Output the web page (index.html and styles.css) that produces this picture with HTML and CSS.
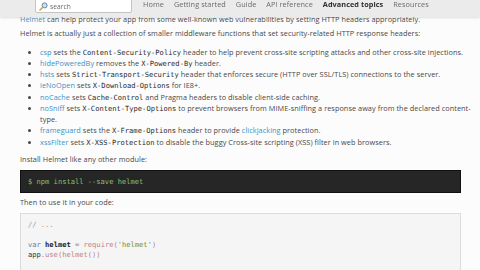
FILE: index.html
```html
<!DOCTYPE html>
<html lang="en">
<head>
  <meta charset="UTF-8" />
  <meta name="viewport" content="width=device-width, initial-scale=1.0"/>
  <title>Security best practices - Helmet</title>
  <link rel="stylesheet" href="styles.css">
</head>
<body>
  <header class="topbar">
    <div class="search">
      <svg class="search-icon" width="9" height="9" viewBox="0 0 9 9">
        <circle cx="5.6" cy="3.4" r="2.5" fill="#cfe0ee" stroke="#5b86b0" stroke-width="1"/>
        <line x1="3.8" y1="5.2" x2="1" y2="8" stroke="#c9a640" stroke-width="1.6" stroke-linecap="round"/>
      </svg>
      <span>search</span>
    </div>
    <nav class="menu">
      <a href="#">Home</a>
      <a href="#">Getting started</a>
      <a href="#">Guide</a>
      <a href="#">API reference</a>
      <a href="#" class="active">Advanced topics</a>
      <a href="#">Resources</a>
    </nav>
  </header>

  <main class="content">
    <p class="lead"><a href="#">Helmet</a> can help protect your app from some well-known web vulnerabilities by setting HTTP headers appropriately.</p>
    <p>Helmet is actually just a collection of smaller middleware functions that set security-related HTTP response headers:</p>
    <ul class="mw-list">
      <li><a href="#">csp</a> sets the <code>Content-Security-Policy</code> header to help prevent cross-site scripting attacks and other cross-site injections.</li>
      <li><a href="#">hidePoweredBy</a> removes the <code>X-Powered-By</code> header.</li>
      <li><a href="#">hsts</a> sets <code>Strict-Transport-Security</code> header that enforces secure (HTTP over SSL/TLS) connections to the server.</li>
      <li><a href="#">ieNoOpen</a> sets <code>X-Download-Options</code> for IE8+.</li>
      <li><a href="#">noCache</a> sets <code>Cache-Control</code> and Pragma headers to disable client-side caching.</li>
      <li><a href="#">noSniff</a> sets <code>X-Content-Type-Options</code> to prevent browsers from MIME-sniffing a response away from the declared content-<br>type.</li>
      <li><a href="#">frameguard</a> sets the <code>X-Frame-Options</code> header to provide <a href="#">clickjacking</a> protection.</li>
      <li><a href="#">xssFilter</a> sets <code>X-XSS-Protection</code> to disable the buggy Cross-site scripting (XSS) filter in web browsers.</li>
    </ul>
    <p>Install Helmet like any other module:</p>
    <pre class="console">$ npm install --save helmet</pre>
    <p>Then to use it in your code:</p>
    <pre class="code"><span class="c">// ...</span>

<span class="k">var</span> <b>helmet</b> <span class="o">=</span> <span class="f">require(</span><span class="s">'helmet'</span><span class="f">)</span>
app<span class="f">.use(helmet())</span></pre>
  </main>
</body>
</html>
```

FILE: styles.css
```css
body {
  font-family: "Open Sans", Arial, sans-serif;
  font-size: 7.3px;
  letter-spacing: 0.06px;
  line-height: 11.25px;
  background-color: #fcfcfc;
  color: #484848;
  margin: 0;
  padding: 0;
}
a {
  color: #3b92c6;
  text-decoration: none;
}
.topbar {
  position: fixed;
  top: 0;
  left: 0;
  right: 0;
  height: 17px;
  background: #ebebeb;
  box-shadow: 0 1px 2px rgba(0, 0, 0, 0.12);
  display: flex;
  align-items: flex-start;
  padding-left: 35px;
  z-index: 2;
}
.search {
  width: 97px;
  height: 17px;
  margin-top: -4px;
  background: #fff;
  border: 1px solid #c4c4c4;
  border-radius: 2px;
  display: flex;
  align-items: center;
  gap: 2px;
  padding: 4px 0 0 3px;
  box-sizing: border-box;
  color: #666;
  font-size: 6.6px;
}
.search-icon {
  display: block;
}
.menu {
  display: flex;
  gap: 10px;
  margin-left: 11px;
  margin-top: -1px;
}
.menu a {
  color: #6a6a6a;
  font-size: 7.3px;
}
.menu a.active {
  color: #2e2e2e;
  font-weight: bold;
}
.content {
  padding: 13.5px 19px 0 20px;
}
.content p {
  margin: 0 0 4.5px;
}
.content p.lead {
  margin-bottom: 3.5px;
}
.mw-list {
  margin: 7px -10px 6px 0;
  padding-left: 20px;
  color: #484848;
}
code {
  font-family: "DejaVu Sans Mono", monospace;
  font-size: 7.1px;
  letter-spacing: 0;
  color: #2a2a2a;
}
pre {
  font-family: "DejaVu Sans Mono", monospace;
  font-size: 7.1px;
  letter-spacing: 0;
  margin: 0 0 4.5px;
}
.console {
  background: #262626;
  border: 1px solid #111;
  color: #8fc06e;
  padding: 5px 7px;
  line-height: 11px;
}
.code {
  background: #f5f5f5;
  border: 1px solid #dcdcdc;
  color: #333;
  padding: 6px 7px;
  line-height: 10px;
  height: 50px;
}
.code .c { color: #9a9a9a; }
.code .k { color: #5a7fa8; }
.code .o { color: #888; }
.code .f { color: #c07f8a; }
.code .s { color: #6f8d3c; }
.code b { color: #222; }
```
